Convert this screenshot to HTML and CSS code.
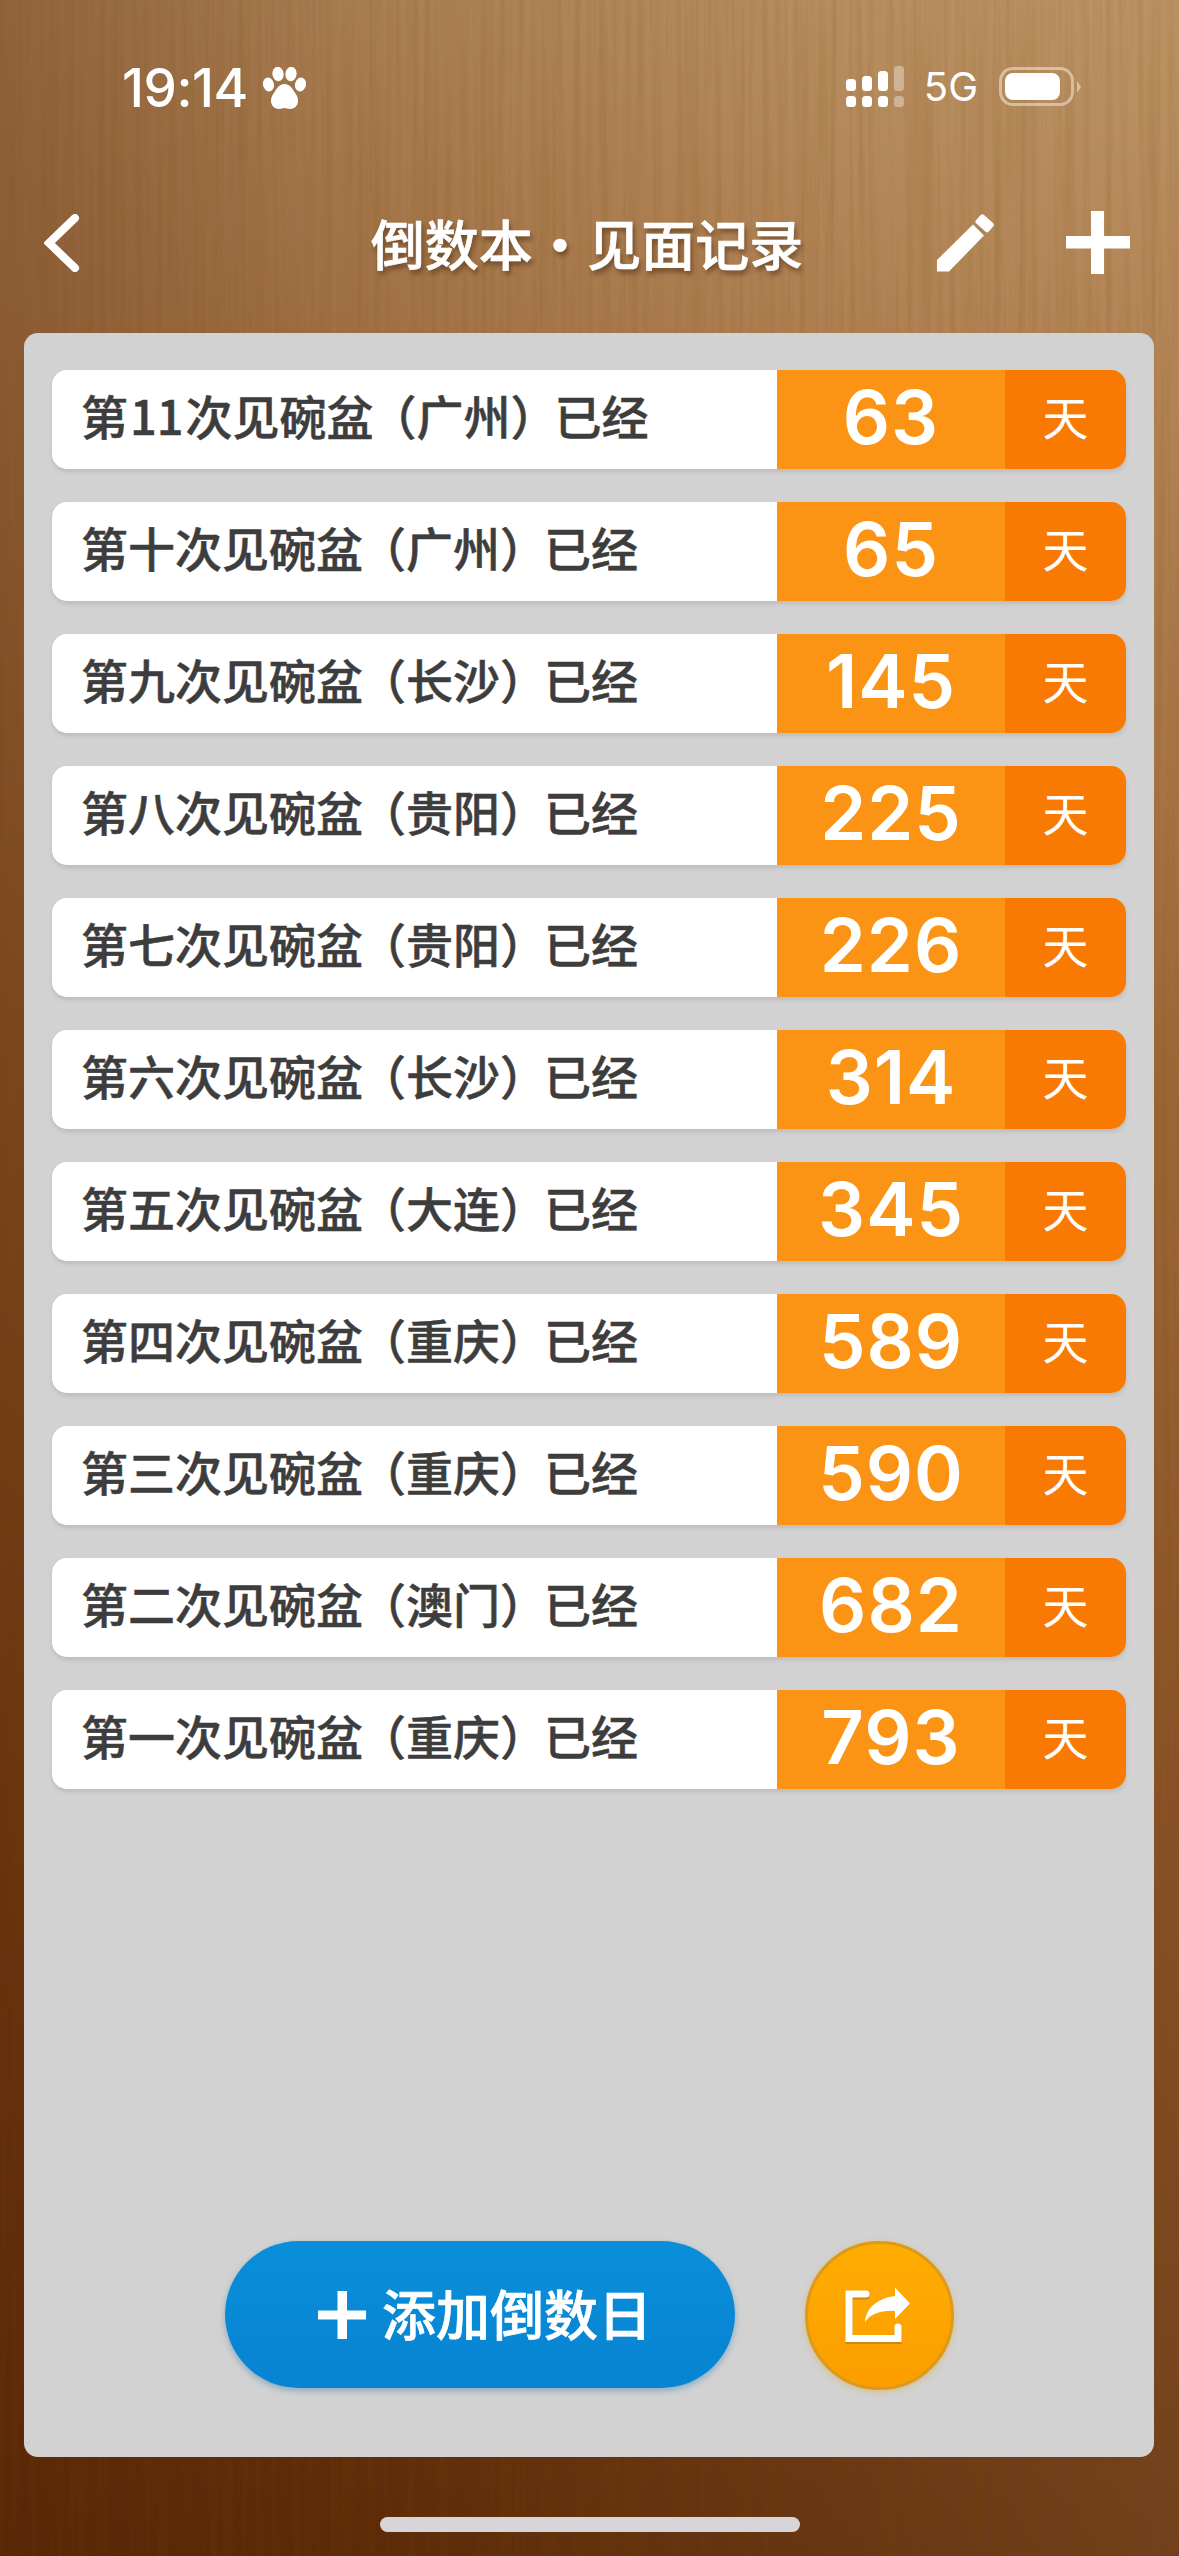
FILE: index.html
```html
<!DOCTYPE html>
<html lang="zh-CN">
<head>
    <meta charset="UTF-8">
    <meta name="viewport" content="width=device-width, initial-scale=1.0">
    <title>倒数本 · 见面记录</title>
    <link rel="stylesheet" href="styles.css">
</head>
<body>
    <!-- wood grain behind everything -->
    <svg class="grain" width="1179" height="2556">
        <filter id="woodGrain" x="0" y="0" width="100%" height="100%">
            <feTurbulence type="fractalNoise" baseFrequency="0.16 0.003" numOctaves="4" seed="7"/>
            <feColorMatrix type="matrix" values="0 0 0 0 0.18  0 0 0 0 0.07  0 0 0 0 0  1.5 0 0 0 -0.55"/>
        </filter>
        <rect width="1179" height="2556" filter="url(#woodGrain)"/>
    </svg>

    <div class="screen">
        <div class="status-bar">
            <div class="status-left">
                <span class="clock">19:14</span>
                <svg class="paw" width="43" height="42" viewBox="0 0 43 42" fill="#fff">
                    <ellipse cx="5.5" cy="17.5" rx="5.5" ry="7" transform="rotate(-14 5.5 17.5)"/>
                    <ellipse cx="15" cy="7" rx="5.6" ry="7.2" transform="rotate(-6 15 7)"/>
                    <ellipse cx="28" cy="7" rx="5.6" ry="7.2" transform="rotate(6 28 7)"/>
                    <ellipse cx="37.5" cy="17.5" rx="5.5" ry="7" transform="rotate(14 37.5 17.5)"/>
                    <path d="M21.5 17c5 0 7.5 4 10 8 2.500 3.500 3.500 5.500 3.500 9 0 5-4 8-8 8-2.500 0-3.500-1-5.500-1s-3 1-5.500 1c-4 0-8-3-8-8 0-3.500 1-5.500 3.500-9 2.500-4 5-8 10-8z"/>
                </svg>
            </div>
            <div class="status-right">
                <svg class="signal" width="58" height="41" viewBox="0 0 58 41" fill="#fff">
                    <rect x="0" y="13" width="10" height="12" rx="3.500"/>
                    <rect x="16" y="10" width="10" height="15" rx="3.500"/>
                    <rect x="32" y="5" width="10" height="20" rx="3.500"/>
                    <rect x="48" y="0" width="10" height="25" rx="3.500" opacity="0.35"/>
                    <rect x="0" y="30" width="10" height="11" rx="3.500"/>
                    <rect x="16" y="30" width="10" height="11" rx="3.500"/>
                    <rect x="32" y="30" width="10" height="11" rx="3.500"/>
                    <rect x="48" y="30" width="10" height="11" rx="3.500" opacity="0.35"/>
                </svg>
                <span class="network">5G</span>
                <div class="battery">
                    <div class="battery-fill"></div>
                </div>
                <div class="battery-tip"></div>
            </div>
        </div>

        <div class="nav">
            <svg class="back" width="36" height="58" viewBox="0 0 36 58">
                <path d="M31 4 L5 29 L31 54" fill="none" stroke="#fff" stroke-width="8" stroke-linecap="round" stroke-linejoin="miter"/>
            </svg>
            <h1 class="title">倒数本 · 见面记录</h1>
            <div class="nav-actions">
                <svg width="58" height="58" viewBox="0 0 58 58" fill="#fff">
                    <path d="M0 57.500 L0 46 L36 10.500 L47 21.500 L12 57.500 Z"/>
                    <rect x="39" y="3.500" width="17" height="11.500" rx="2.500" transform="rotate(42 47.500 9.500)"/>
                </svg>
                <svg width="64" height="63" viewBox="0 0 64 63" fill="#fff">
                    <rect x="25" y="0" width="13" height="63"/>
                    <rect x="0" y="25" width="64" height="12.500"/>
                </svg>
            </div>
        </div>

        <div class="panel">
            <div class="list">
                <div class="row"><div class="row-text">第<span class="digits">11</span>次见碗盆<span class="place">（广州）</span>已经</div><div class="row-num">63</div><div class="row-unit"><span>天</span></div></div>
                <div class="row"><div class="row-text">第十次见碗盆<span class="place">（广州）</span>已经</div><div class="row-num">65</div><div class="row-unit"><span>天</span></div></div>
                <div class="row"><div class="row-text">第九次见碗盆<span class="place">（长沙）</span>已经</div><div class="row-num">145</div><div class="row-unit"><span>天</span></div></div>
                <div class="row"><div class="row-text">第八次见碗盆<span class="place">（贵阳）</span>已经</div><div class="row-num">225</div><div class="row-unit"><span>天</span></div></div>
                <div class="row"><div class="row-text">第七次见碗盆<span class="place">（贵阳）</span>已经</div><div class="row-num">226</div><div class="row-unit"><span>天</span></div></div>
                <div class="row"><div class="row-text">第六次见碗盆<span class="place">（长沙）</span>已经</div><div class="row-num">314</div><div class="row-unit"><span>天</span></div></div>
                <div class="row"><div class="row-text">第五次见碗盆<span class="place">（大连）</span>已经</div><div class="row-num">345</div><div class="row-unit"><span>天</span></div></div>
                <div class="row"><div class="row-text">第四次见碗盆<span class="place">（重庆）</span>已经</div><div class="row-num">589</div><div class="row-unit"><span>天</span></div></div>
                <div class="row"><div class="row-text">第三次见碗盆<span class="place">（重庆）</span>已经</div><div class="row-num">590</div><div class="row-unit"><span>天</span></div></div>
                <div class="row"><div class="row-text">第二次见碗盆<span class="place">（澳门）</span>已经</div><div class="row-num">682</div><div class="row-unit"><span>天</span></div></div>
                <div class="row"><div class="row-text">第一次见碗盆<span class="place">（重庆）</span>已经</div><div class="row-num">793</div><div class="row-unit"><span>天</span></div></div>
            </div>

            <div class="panel-footer">
                <button class="add-button">
                    <svg width="48" height="48" viewBox="0 0 48 48" fill="#fff">
                        <rect x="19.500" y="0" width="9.500" height="48"/>
                        <rect x="0" y="19.500" width="48" height="9"/>
                    </svg>
                    <span>添加倒数日</span>
                </button>
                <button class="share-button">
                    <svg width="149" height="149" viewBox="0 0 149 149">
                        <path d="M61 55 L44 55 L44 99.500 L93 99.500 L93 88" fill="none" stroke="#c98a10" stroke-width="7" stroke-linecap="round"/>
                        <path d="M61 53 L44 53 L44 97.500 L93 97.500 L93 86" fill="none" stroke="#fff" stroke-width="7" stroke-linecap="round"/>
                        <path d="M60 81 C61 66 74 57 90 55 L90 46.500 L105 62.500 L90 78 L90 70 C78 69 66 72 60 81 Z" fill="#fff"/>
                    </svg>
                </button>
            </div>
        </div>

        <div class="home-area">
            <div class="home-bar"></div>
        </div>
    </div>
</body>
</html>
```

FILE: styles.css
```css
html, body {
    margin: 0;
    padding: 0;
}
body {
    position: relative;
    width: 1179px;
    height: 2556px;
    overflow: hidden;
    font-family: "Noto Sans CJK SC", "Noto Sans", sans-serif;
    background-color: #7a4a24;
    background-image:
        linear-gradient(90deg, rgba(80, 30, 5, 0.34) 0%, rgba(80, 30, 5, 0.1) 30%, rgba(255, 220, 170, 0.06) 70%, rgba(255, 220, 170, 0.12) 100%),
        linear-gradient(180deg, #b3895c 0%, #a9794c 14%, #925a2b 40%, #793f15 70%, #5e2b09 100%);
}
.grain {
    position: absolute;
    top: 0;
    left: 0;
    opacity: 0.22;
}
.screen {
    position: relative;
    display: flex;
    flex-direction: column;
    height: 2556px;
}

/* status bar */
.status-bar {
    height: 120px;
    box-sizing: border-box;
    padding: 66px 98px 0 122px;
    display: flex;
    justify-content: space-between;
    align-items: flex-start;
    color: #fff;
}
.status-left {
    display: flex;
    align-items: center;
    gap: 15px;
}
.clock {
    font-family: Inter, sans-serif;
    font-size: 53px;
    font-weight: 500;
    line-height: 44px;
    letter-spacing: -0.5px;
}
.status-right {
    display: flex;
    align-items: center;
    height: 41px;
}
.network {
    font-family: Inter, sans-serif;
    font-size: 40px;
    line-height: 41px;
    margin-left: 20px;
    margin-right: 21px;
}
.battery {
    box-sizing: border-box;
    width: 75px;
    height: 39px;
    padding: 3px 11px 3px 3px;
    border: 3px solid rgba(255, 255, 255, 0.45);
    border-radius: 14px;
}
.battery-fill {
    height: 100%;
    background: #fff;
    border-radius: 8px;
}
.battery-tip {
    width: 0;
    height: 0;
    margin-left: 3px;
    border-top: 6px solid transparent;
    border-bottom: 6px solid transparent;
    border-left: 4px solid rgba(255, 255, 255, 0.45);
}

/* nav */
.nav {
    height: 213px;
    box-sizing: border-box;
    padding: 91px 49px 0 44px;
    display: grid;
    grid-template-columns: 1fr auto 1fr;
    align-items: center;
    align-content: start;
}
.title {
    margin: 0;
    font-size: 54px;
    font-weight: 500;
    line-height: 63px;
    word-spacing: -12px;
    color: #fff;
    -webkit-text-stroke: 0.7px #fff;
    text-shadow: 2px 4px 5px rgba(40, 15, 0, 0.45);
    white-space: nowrap;
}
.nav-actions {
    display: flex;
    justify-content: flex-end;
    align-items: center;
    gap: 71px;
}

/* list */
.panel {
    box-sizing: border-box;
    height: 2124px;
    margin: 0 25px 0 24px;
    padding: 37px 28px 67px;
    display: flex;
    flex-direction: column;
    justify-content: space-between;
    background: #d2d2d2;
    border-radius: 14px;
}
.list {
    display: flex;
    flex-direction: column;
    gap: 33px;
}
.row {
    display: flex;
    height: 99px;
    border-radius: 15px;
    overflow: hidden;
    box-shadow: 0 3px 4px rgba(0, 0, 0, 0.1);
}
.row-text {
    flex: 1;
    padding-left: 29px;
    background: #fff;
    color: #3d3d3d;
    font-size: 47px;
    font-weight: 500;
    line-height: 89px;
    -webkit-text-stroke: 0.5px #3d3d3d;
    white-space: nowrap;
}
.digits {
    margin: 0 2px;
}
.place {
    margin: 0 -3px 0 -4px;
}
.row-num {
    width: 228px;
    display: flex;
    align-items: center;
    justify-content: center;
    padding-bottom: 5px;
    box-sizing: border-box;
    background: #fb9415;
    color: #fff;
    font-family: Inter, sans-serif;
    font-size: 74px;
    font-weight: 600;
    letter-spacing: 1px;
}
.row-unit {
    width: 121px;
    display: flex;
    align-items: center;
    justify-content: center;
    padding-bottom: 10px;
    box-sizing: border-box;
    background: #f97a03;
    color: #fff;
    font-size: 46px;
}

/* bottom buttons */
.panel-footer {
    display: flex;
    align-items: flex-start;
    gap: 70px;
    padding-left: 173px;
}
.add-button {
    width: 510px;
    height: 147px;
    display: flex;
    align-items: center;
    justify-content: center;
    gap: 16px;
    padding: 0 0 4px 10px;
    border: none;
    border-radius: 74px;
    background: linear-gradient(180deg, #0a8fda, #0783d1);
    box-shadow: 0 3px 6px rgba(7, 100, 170, 0.35);
    color: #fff;
    font-family: inherit;
    font-size: 54px;
    font-weight: 500;
    -webkit-text-stroke: 0.7px #fff;
}
.add-button svg {
    margin-top: 4px;
}
.share-button {
    box-sizing: border-box;
    width: 149px;
    height: 149px;
    padding: 0;
    border: 3px solid #dc9a18;
    border-radius: 50%;
    background: linear-gradient(180deg, #ffad02, #fc9d00);
    box-shadow: 0 2px 6px rgba(230, 150, 0, 0.35);
    display: flex;
    align-items: center;
    justify-content: center;
}
.share-button svg {
    margin: -3px;
    flex-shrink: 0;
}

/* home indicator */
.home-area {
    flex: 1;
    padding-top: 60px;
    display: flex;
    justify-content: center;
}
.home-bar {
    width: 420px;
    height: 15px;
    border-radius: 8px;
    background: #d6d6da;
}
```
